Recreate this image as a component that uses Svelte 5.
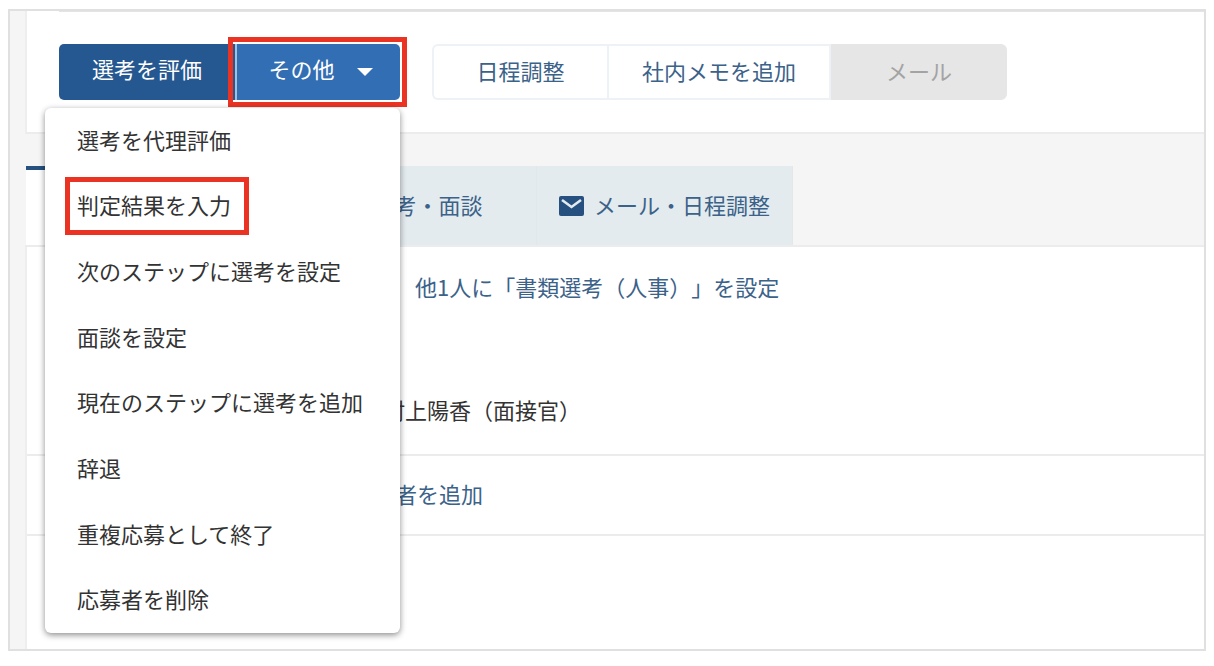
<svelte:options runes={true} />

<script>
  const menuItems = [
    { label: '選考を代理評価' },
    { label: '判定結果を入力', marked: true },
    { label: '次のステップに選考を設定' },
    { label: '面談を設定' },
    { label: '現在のステップに選考を追加' },
    { label: '辞退' },
    { label: '重複応募として終了' },
    { label: '応募者を削除' },
  ]

  let open = $state(true)
</script>

<main>
  <section class="toolbar">
    <div class="actions">
      <div class="split">
        <button class="evaluate">選考を評価</button>
        <button
          class="more"
          aria-haspopup="menu"
          aria-expanded={open}
          onclick={() => (open = !open)}
        >
          その他
          <svg width="16" height="8" viewBox="0 0 16 8" aria-hidden="true">
            <path d="M0 0h16L8 8z" fill="#fff" />
          </svg>
        </button>
        {#if open}
          <ul class="menu">
            {#each menuItems as item}
              <li>
                <button class:marked={item.marked}><span>{item.label}</span></button>
              </li>
            {/each}
          </ul>
        {/if}
      </div>
      <div class="group">
        <button class="schedule">日程調整</button>
        <button class="memo">社内メモを追加</button>
        <button class="mail" disabled>メール</button>
      </div>
    </div>
  </section>

  <nav>
    <a class="tab active" href="#history" aria-label="選考履歴"></a>
    <a class="tab selection" href="#selection">選考・面談</a>
    <a class="tab messages" href="#messages">
      <svg width="25" height="20" viewBox="0 0 25 20" aria-hidden="true">
        <rect width="25" height="20" rx="2" fill="#25507f" />
        <path d="M3 4l9.500 7L22 4" fill="none" stroke="#e4ebef" stroke-width="2.600" />
      </svg>
      メール・日程調整
    </a>
  </nav>

  <section class="detail">
    <div class="step">
      <a href="#step">他1人に「書類選考（人事）」を設定</a>
      <p>村上陽香（面接官）</p>
    </div>
    <div class="add">
      <a href="#add">評価者を追加</a>
    </div>
  </section>
</main>

<style>
  :global(body) {
    margin: 0;
    background: #fff;
  }

  main {
    margin: 9px 8px;
    padding-left: 15px;
    border: 2px solid #e0e0e0;
    background: #f5f5f5;
    color: #333;
    font-family: 'Noto Sans CJK JP', sans-serif;
    font-size: 22px;
    line-height: 24px;
    text-spacing-trim: space-all;
  }

  button {
    margin: 0;
    padding: 0;
    border: none;
    font: inherit;
    color: inherit;
    background: none;
    cursor: pointer;
  }

  a {
    color: #3b6289;
    text-decoration: none;
  }

  .toolbar {
    padding: 0 0 32px 32px;
    background: #fff;
    border-left: 2px solid #eee;
    border-bottom: 2px solid #ececec;
  }

  .actions {
    display: flex;
    gap: 32px;
    padding-top: 32px;
    border-top: 1px solid #e4e4e4;
  }

  .split {
    position: relative;
    display: flex;
    height: 56px;
    color: #fff;
  }

  .evaluate {
    width: 176px;
    padding-bottom: 8px;
    border-radius: 5px 0 0 5px;
    background: #255891;
  }

  .more {
    position: relative;
    display: flex;
    align-items: center;
    justify-content: center;
    gap: 22px;
    width: 165px;
    padding: 0 0 8px 4px;
    border-left: 2px solid #a5c0de;
    border-radius: 0 5px 5px 0;
    background: #326eb3;
  }

  /* square frame around the rounded button */
  .more::after {
    content: '';
    position: absolute;
    inset: -7px -7px -7px -9px;
    border: 5px solid #ea3323;
  }

  .more svg {
    margin-top: 8px;
  }

  .menu {
    position: absolute;
    z-index: 1;
    top: calc(100% + 8px);
    right: 0;
    display: grid;
    grid-auto-rows: 1fr;
    width: 355px;
    min-height: 525px;
    margin: 0;
    padding: 0;
    border-radius: 6px;
    background: #fff;
    box-shadow: 0 2px 6px rgba(0, 0, 0, 0.45);
    color: #333;
    list-style: none;
  }

  .menu button {
    display: flex;
    align-items: center;
    width: 100%;
    height: 100%;
    padding-left: 25px;
    text-align: left;
  }

  .menu span {
    padding: 10px 13px 14px 7px;
  }

  .marked span {
    outline: 5px solid #ea3323;
  }

  .group {
    display: flex;
    height: 56px;
    color: #3b6289;
  }

  .group button {
    box-sizing: border-box;
    padding-bottom: 4px;
    border: 2px solid #edf2f6;
  }

  .group .schedule {
    width: 175px;
    border-right: none;
    border-radius: 6px 0 0 6px;
  }

  .group .memo {
    width: 224px;
  }

  .group .mail {
    width: 176px;
    border-color: #e6e6e6;
    border-radius: 0 6px 6px 0;
    background: #e6e6e6;
    color: #a3a3a3;
    cursor: default;
  }

  nav {
    display: flex;
    padding: 32px 0 0 1px;
    border-bottom: 2px solid #ececec;
  }

  .tab {
    box-sizing: border-box;
    display: flex;
    align-items: center;
    justify-content: center;
    height: 79px;
    padding-bottom: 4px;
    border-right: 1px solid #e4e6e8;
    background: #e4ebef;
  }

  .active {
    width: 293px;
    border-top: 4px solid #25507f;
    background: #fff;
  }

  .selection {
    width: 218px;
  }

  .messages {
    gap: 10px;
    padding: 0 22px 4px;
  }

  .messages svg {
    margin-top: 4px;
  }

  .detail {
    min-height: 402px;
    background: #fff;
    border-left: 2px solid #eee;
  }

  .step {
    padding: 27px 0 33px 356px;
    border-bottom: 2px solid #ececec;
  }

  .step a {
    padding-left: 32px;
  }

  .step p {
    margin: 99px 0 0;
  }

  .add {
    padding: 25px 0 29px 324px;
    border-bottom: 2px solid #ececec;
  }
</style>
